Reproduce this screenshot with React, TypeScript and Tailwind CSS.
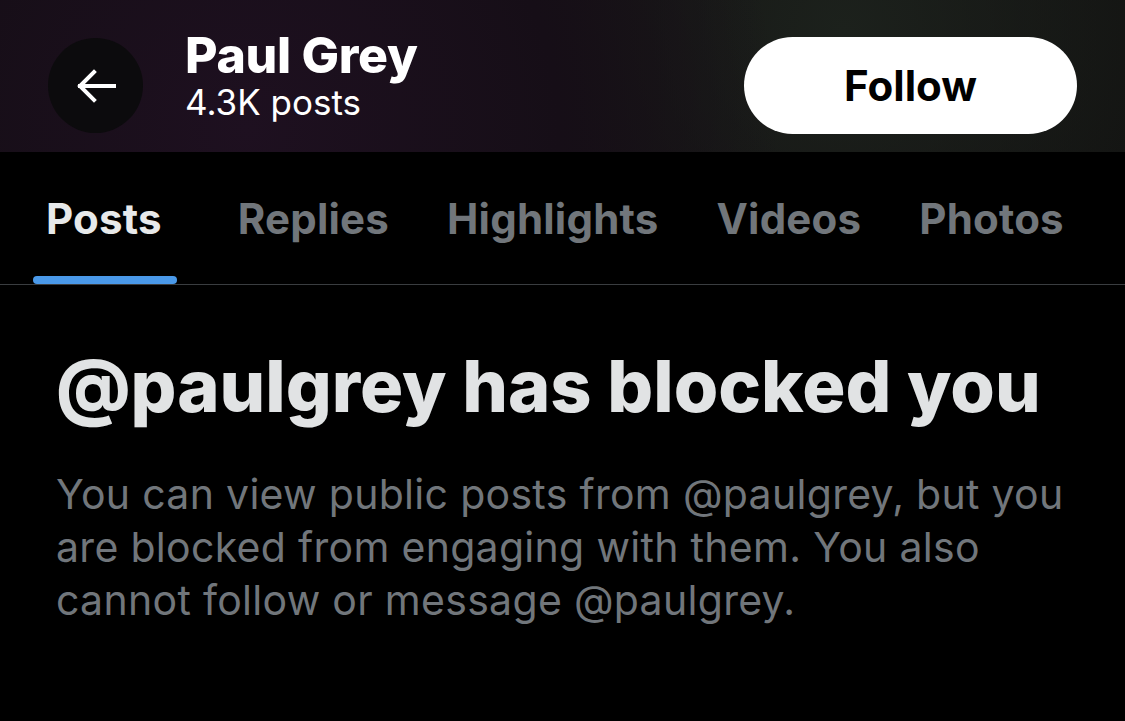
const tabs = ["Posts", "Replies", "Highlights", "Videos", "Photos"];

function BackArrow() {
  return (
    <svg width="40" height="34" viewBox="0 0 40 34" fill="none" stroke="currentColor" strokeWidth="4" strokeLinecap="square">
      <path d="M4 17H38" />
      <path d="M18 3L4 17L18 31" />
    </svg>
  );
}

export default function App() {
  return (
    <div className="h-[721px] w-[1125px] overflow-hidden bg-black font-['Inter',sans-serif]">
      <header className="flex h-[152px] items-start bg-[radial-gradient(circle_at_22%_85%,#1e1020_0%,#160e17_35%,transparent_60%),radial-gradient(circle_at_75%_20%,#1c211c_0%,transparent_45%),linear-gradient(90deg,#111111,#141012_50%,#121211)] pl-[48px] pr-[48px]">
        <button
          type="button"
          className="mt-[38px] flex h-[95px] w-[95px] items-center justify-center rounded-full bg-[#0c0b0d] text-white"
        >
          <BackArrow />
        </button>

        <div className="ml-[42px] mt-[28px] flex flex-col">
          <span className="text-[50px] font-extrabold leading-[54px] tracking-[-0.3px] text-white">
            Paul Grey
          </span>
          <span className="text-[35px] leading-[40px] text-white">4.3K posts</span>
        </div>

        <button
          type="button"
          className="ml-auto mt-[37px] h-[97px] w-[333px] rounded-full bg-white text-[42px] font-bold text-black"
        >
          Follow
        </button>
      </header>

      <nav className="flex h-[133px] items-start gap-[58px] border-b border-[#3a3d40] pl-[46px] pt-[42px]">
        {tabs.map((tab, i) => (
          <div key={tab} className={i === 0 ? "mr-[18px]" : ""}>
            <span
              className={[
                "text-[42px] font-bold leading-[50px] tracking-[0.2px]",
                i === 0 ? "text-[#e7e9ea]" : "text-[#71767b]",
              ].join(" ")}
            >
              {tab}
            </span>
          </div>
        ))}
      </nav>
      <div className="relative -mt-[9px] ml-[33px] h-[8px] w-[144px] rounded-full bg-[#4a99e9]" />

      <main className="px-[56px] pt-[62px]">
        <h1 className="text-[72px] font-extrabold leading-[80px] text-[#e1e3e4]">
          @paulgrey has blocked you
        </h1>
        <p className="mt-[42px] text-[41px] leading-[53px] tracking-[0.3px] text-[#71767b]">
          You can view public posts from @paulgrey, but you are blocked from engaging with them. You
          also cannot follow or message @paulgrey.
        </p>
      </main>
    </div>
  );
}
